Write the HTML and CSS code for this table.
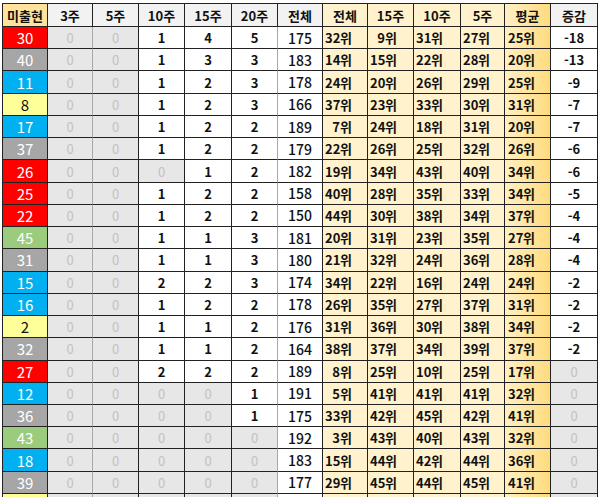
FILE: index.html
```html
<!DOCTYPE html>
<html lang="ko">
<head>
<meta charset="utf-8">
<title>미출현 통계</title>
<link rel="stylesheet" href="styles.css">
</head>
<body>
<div class="sheet" id="sheet">
  <div class="c h h-miss">미출현</div>
  <div class="c h">3주</div>
  <div class="c h">5주</div>
  <div class="c h">10주</div>
  <div class="c h">15주</div>
  <div class="c h">20주</div>
  <div class="c h">전체</div>
  <div class="c h h-rank">전체</div>
  <div class="c h h-rank">15주</div>
  <div class="c h h-rank">10주</div>
  <div class="c h h-rank">5주</div>
  <div class="c h h-avg">평균</div>
  <div class="c h">증감</div>
</div>
<script src="app.js"></script>
</body>
</html>
```
FILE: styles.css
```css
html, body {
  margin: 0;
  padding: 0;
  background: #ffffff;
  overflow: hidden;
}
body {
  padding: 3px 0 0 2px;
  font-family: "Noto Sans CJK KR", "Noto Sans", sans-serif;
  color: #111;
}
.sheet {
  display: grid;
  grid-template-columns: 45px 45px 46px 46px 47px 46px 45px 45px 46px 47px 44px 46px 47px;
  grid-template-rows: 23px;
  grid-auto-rows: 22.24px;
  border-left: 1px solid #222;
  border-top: 1px solid #222;
  width: max-content;
}
.c {
  box-sizing: border-box;
  border-right: 1px solid #222;
  border-bottom: 1px solid #222;
  display: flex;
  align-items: center;
  justify-content: center;
  font-size: 13px;
  font-weight: 700;
  line-height: 1;
  background: #fff;
  white-space: nowrap;
}
.c.soft-r { border-right-color: #a8a8a8; }
.h {
  background: #f2f2f2;
  font-size: 13px;
}
.h-miss { background: #ffe39c; }
.h-rank { background: #fff2cc; }
.h-avg { background: linear-gradient(to right, #fff0c4, #ffdb7e); }
.zero {
  background: #e7e7e7;
  color: #c2c2c2;
  font-weight: 400;
}
.miss { font-size: 15px; font-weight: 400; color: #fff; }
.num-red { background: #ff0000; }
.num-grey { background: #a6a6a6; }
.num-blue { background: #00b0f0; }
.num-yellow { background: #ffff99; color: #111; }
.num-green { background: #9bcb7d; }
.rank {
  background: #fff2cc;
  justify-content: flex-start;
  padding-left: 2px;
}
.rank.avg {
  background: linear-gradient(to right, #fff0c4, #ffdb7e);
  padding-left: 3px;
}
.rank .n {
  display: inline-block;
  width: 15px;
  text-align: right;
}
.total { font-weight: 500; font-size: 14px; }
```
FILE: app.js
```js
const rows = [
  [30,'red',0,0,1,4,5,175,32,9,31,27,25,-18],
  [40,'grey',0,0,1,3,3,183,14,15,22,28,20,-13],
  [11,'blue',0,0,1,2,3,178,24,20,26,29,25,-9],
  [8,'yellow',0,0,1,2,3,166,37,23,33,30,31,-7],
  [17,'blue',0,0,1,2,2,189,7,24,18,31,20,-7],
  [37,'grey',0,0,1,2,2,179,22,26,25,32,26,-6],
  [26,'red',0,0,0,1,2,182,19,34,43,40,34,-6],
  [25,'red',0,0,1,2,2,158,40,28,35,33,34,-5],
  [22,'red',0,0,1,2,2,150,44,30,38,34,37,-4],
  [45,'green',0,0,1,1,3,181,20,31,23,35,27,-4],
  [31,'grey',0,0,1,1,3,180,21,32,24,36,28,-4],
  [15,'blue',0,0,2,2,3,174,34,22,16,24,24,-2],
  [16,'blue',0,0,1,2,2,178,26,35,27,37,31,-2],
  [2,'yellow',0,0,1,1,2,176,31,36,30,38,34,-2],
  [32,'grey',0,0,1,1,2,164,38,37,34,39,37,-2],
  [27,'red',0,0,2,2,2,189,8,25,10,25,17,0],
  [12,'blue',0,0,0,0,1,191,5,41,41,41,32,0],
  [36,'grey',0,0,0,0,1,175,33,42,45,42,41,0],
  [43,'green',0,0,0,0,0,192,3,43,40,43,32,0],
  [18,'blue',0,0,0,0,0,183,15,44,42,44,36,0],
  [39,'grey',0,0,0,0,0,177,29,45,44,45,41,0]
];
const sheet = document.getElementById('sheet');
function cell(cls, html) {
  const d = document.createElement('div');
  d.className = 'c ' + cls;
  d.innerHTML = html;
  sheet.appendChild(d);
}
rows.forEach(r => {
  cell('miss num-' + r[1], String(r[0]));
  for (let i = 2; i <= 6; i++) {
    const v = r[i];
    let cls = v === 0 ? 'zero' : '';
    if (i === 2 || i === 6) cls += ' soft-r';
    cell(cls, String(v));
  }
  cell('total', String(r[7]));
  for (let i = 8; i <= 12; i++) {
    cell('rank' + (i === 12 ? ' avg' : ''), '<span class="n">' + r[i] + '</span>위');
  }
  const d = r[13];
  cell(d === 0 ? 'zero' : '', String(d));
});
const tail = ['miss num-yellow', 'zero soft-r', 'zero', 'zero', 'zero', 'zero soft-r', '', 'rank', 'rank', 'rank', 'rank', 'rank avg', 'zero'];
tail.forEach(cls => cell(cls, ''));
```
